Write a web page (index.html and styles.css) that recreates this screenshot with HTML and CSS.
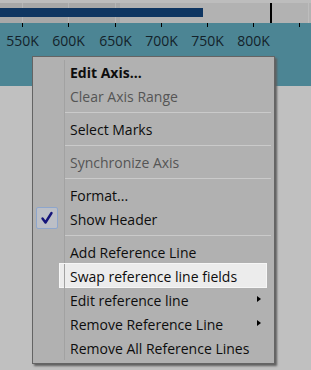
FILE: index.html
```html
<!DOCTYPE html>
<html lang="en">
<head>
    <meta charset="UTF-8">
    <title>Axis menu</title>
    <link rel="stylesheet" href="styles.css">
</head>
<body>
    <div class="chart">
        <svg class="axis" width="311" height="86" viewBox="0 0 311 86">
            <rect x="0" y="0" width="311" height="23" fill="#b2b2b2"/>
            <rect x="0" y="0" width="311" height="3" fill="#bdbdbd"/>
            <rect x="0" y="3" width="120" height="20" fill="#a8a8a8"/>
            <rect x="22" y="3" width="1" height="20" fill="#b6b6b6"/>
            <rect x="68" y="3" width="1" height="20" fill="#b6b6b6"/>
            <rect x="115" y="3" width="1" height="20" fill="#b6b6b6"/>
            <rect x="0" y="8" width="203" height="9" fill="#0f3662"/>
            <rect x="270" y="3" width="2" height="20" fill="#000"/>
            <rect x="308" y="3" width="1" height="20" fill="#bdbdbd"/>
            <rect x="0" y="23" width="311" height="63" fill="#4c8594"/>
            <g fill="#000">
                <rect x="22" y="23" width="1" height="4"/>
                <rect x="68" y="23" width="1" height="4"/>
                <rect x="115" y="23" width="1" height="4"/>
                <rect x="161" y="23" width="1" height="4"/>
                <rect x="207" y="23" width="1" height="4"/>
                <rect x="253" y="23" width="1" height="4"/>
                <rect x="299" y="23" width="1" height="4"/>
            </g>
            <g class="tick-labels" text-anchor="middle">
                <text x="22.5" y="46">550K</text>
                <text x="68.5" y="46">600K</text>
                <text x="115.5" y="46">650K</text>
                <text x="161.5" y="46">700K</text>
                <text x="207.5" y="46">750K</text>
                <text x="253.5" y="46">800K</text>
            </g>
        </svg>
    </div>

    <div class="menu">
        <div class="item bold"><span class="icon"></span><span class="label">Edit Axis...</span></div>
        <div class="item disabled"><span class="icon"></span><span class="label">Clear Axis Range</span></div>
        <div class="sep"><span class="icon"></span><span class="line"></span></div>
        <div class="item"><span class="icon"></span><span class="label">Select Marks</span></div>
        <div class="sep"><span class="icon"></span><span class="line"></span></div>
        <div class="item disabled"><span class="icon"></span><span class="label">Synchronize Axis</span></div>
        <div class="sep"><span class="icon"></span><span class="line"></span></div>
        <div class="item"><span class="icon"></span><span class="label">Format...</span></div>
        <div class="item">
            <span class="icon">
                <span class="check">
                    <svg width="14" height="14" viewBox="0 0 14 14"><path d="M2.5 7.5 L5.5 11.5 L11.5 2" fill="none" stroke="#14147a" stroke-width="2.4" stroke-linecap="round" stroke-linejoin="round"/></svg>
                </span>
            </span>
            <span class="label">Show Header</span>
        </div>
        <div class="sep"><span class="icon"></span><span class="line"></span></div>
        <div class="item"><span class="icon"></span><span class="label">Add Reference Line</span></div>
        <div class="item hover"><span class="icon"></span><span class="label">Swap reference line fields</span></div>
        <div class="item"><span class="icon"></span><span class="label">Edit reference line</span><span class="arrow"></span></div>
        <div class="item"><span class="icon"></span><span class="label">Remove Reference Line</span><span class="arrow"></span></div>
        <div class="item"><span class="icon"></span><span class="label">Remove All Reference Lines</span></div>
    </div>
</body>
</html>
```

FILE: styles.css
```css
body {
    margin: 0;
    background-color: #c0c0c0;
    font-family: "Open Sans", "Noto Sans", sans-serif;
    width: 311px;
    height: 370px;
    position: relative;
    overflow: hidden;
}

.axis {
    display: block;
}

.tick-labels {
    font-family: "Open Sans", "Noto Sans", sans-serif;
    font-size: 14px;
    fill: #13222a;
}

.menu {
    position: absolute;
    left: 32px;
    top: 56px;
    width: 241px;
    height: 303px;
    padding-top: 3px;
    box-sizing: content-box;
    background-color: #b1b1b1;
    border: 1px solid #646464;
    box-shadow: 2px 2px 2px #5f5f5f;
    display: flex;
    flex-direction: column;
}

.item {
    display: flex;
    align-items: center;
    height: 24px;
    font-size: 14px;
    color: #0d0d0d;
    position: relative;
}

.icon {
    width: 31px;
    height: 100%;
    border-right: 1px solid #a2a2a2;
    flex-shrink: 0;
    display: flex;
    align-items: flex-start;
}

.label {
    padding-left: 5px;
    white-space: nowrap;
}

.bold .label {
    font-weight: bold;
}

.disabled .label {
    color: #555;
}

.hover::before {
    content: "";
    position: absolute;
    left: 26px;
    top: -1px;
    width: 208px;
    height: 25px;
    background-color: #ececec;
    border: 1px solid #f6f6f6;
    box-sizing: border-box;
}

.hover .icon {
    position: relative;
}

.hover .label {
    position: relative;
}

.check {
    margin-left: 3px;
    width: 20px;
    height: 20px;
    border: 1px solid #8ea6cc;
    border-radius: 2px;
    background-color: #bcbfc6;
    display: flex;
    align-items: center;
    justify-content: center;
}

.arrow {
    position: absolute;
    left: 224px;
    top: 8px;
    width: 0;
    height: 0;
    border-top: 3.5px solid transparent;
    border-bottom: 3.5px solid transparent;
    border-left: 4px solid #000;
}

.sep {
    display: flex;
    height: 9px;
}

.sep .line {
    flex: 1;
    margin-top: 4px;
    margin-right: 3px;
    height: 1px;
    background-color: #cacaca;
}
```
